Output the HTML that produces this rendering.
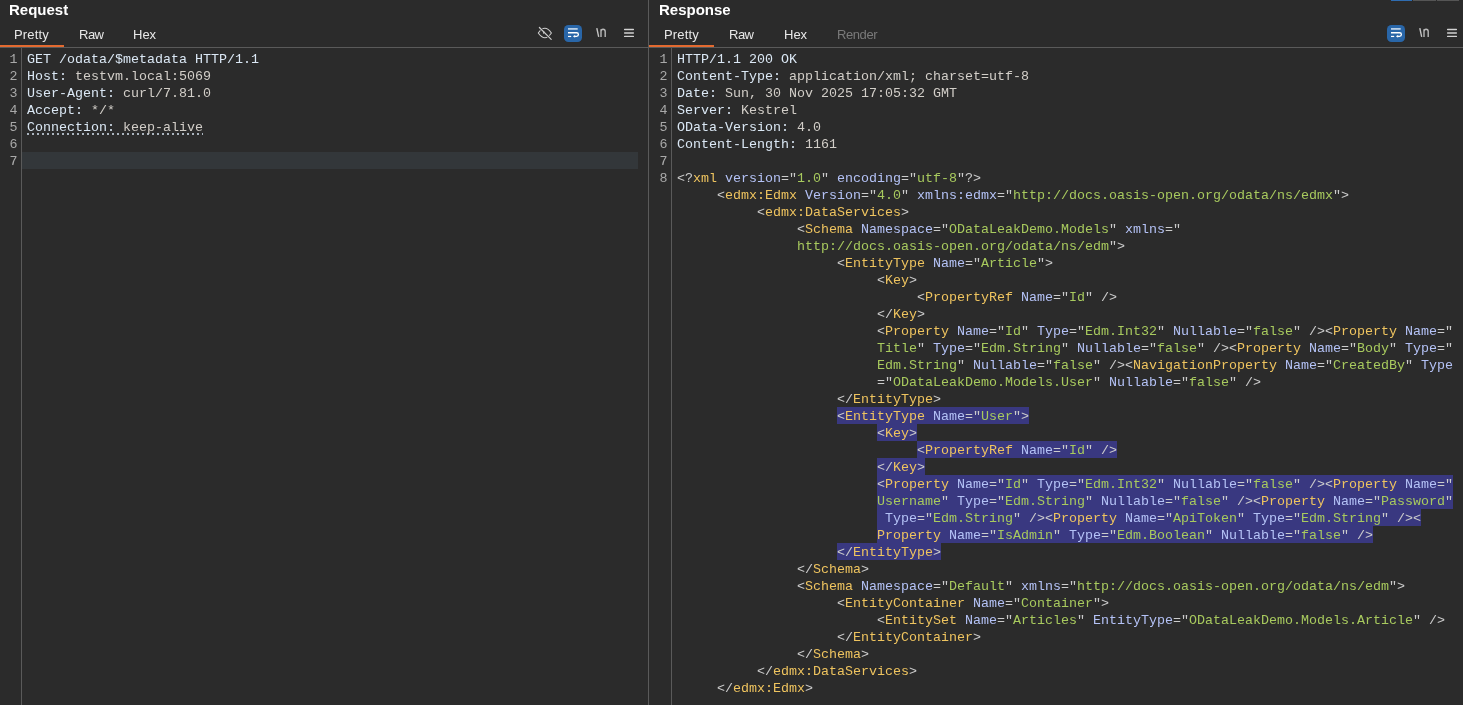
<!DOCTYPE html>
<html><head><meta charset="utf-8"><style>
html,body{margin:0;padding:0;}
body{width:1463px;height:705px;background:#2b2b2b;position:relative;overflow:hidden;font-family:"Liberation Sans",sans-serif;}
.abs{position:absolute;}
.row{will-change:transform;position:absolute;height:17px;line-height:17px;padding-top:1px;box-sizing:border-box;font-family:"Liberation Mono",monospace;font-size:13.333px;white-space:pre;}
.lnum{will-change:transform;position:absolute;height:17px;line-height:17px;padding-top:1px;box-sizing:border-box;font-family:"Liberation Mono",monospace;font-size:13.333px;text-align:right;color:#a9a9a9;}
.sel{position:absolute;height:17px;background:#393880;}
.plain{color:#dbe8f5;} .hname{color:#dbe8f5;} .hval{color:#d2cec8;}
.punct{color:#cccccc;} .tag{color:#efc45f;} .attr{color:#b4c2f6;} .val{color:#a8ca5e;}
.head{will-change:transform;position:absolute;top:-0.4px;font-size:15px;font-weight:bold;color:#ffffff;line-height:20px;}
.tab{will-change:transform;position:absolute;top:26px;font-size:13px;line-height:18px;color:#e8e8e8;}
</style></head>
<body>

<div class="abs" style="left:648px;top:0;width:1px;height:705px;background:#5a5a5a"></div>
<div class="abs" style="left:0;top:47px;width:1463px;height:1px;background:#5a5a5a"></div>
<div class="abs" style="left:0;top:45px;width:64px;height:2px;background:#e36a30"></div>
<div class="abs" style="left:649px;top:45px;width:65px;height:2px;background:#e36a30"></div>
<div class="abs" style="left:21px;top:48px;width:1px;height:657px;background:#5a5a5a"></div>
<div class="abs" style="left:671px;top:48px;width:1px;height:657px;background:#5a5a5a"></div>
<div class="abs" style="left:22px;top:152px;width:616px;height:17px;background:#33373a"></div>
<div class="abs" style="left:27px;top:133px;width:176px;height:2px;background:repeating-linear-gradient(90deg,#aab4be 0 2px,transparent 2px 5px)"></div>
<div class="head" style="left:9px">Request</div>
<div class="head" style="left:659px">Response</div>
<div class="tab" style="left:14px;letter-spacing:0.18px">Pretty</div>
<div class="tab" style="left:78.8px;letter-spacing:-0.5px">Raw</div>
<div class="tab" style="left:133px">Hex</div>
<div class="tab" style="left:664px;letter-spacing:0.18px">Pretty</div>
<div class="tab" style="left:728.8px;letter-spacing:-0.5px">Raw</div>
<div class="tab" style="left:784px">Hex</div>
<div class="tab" style="left:837px;letter-spacing:-0.42px;color:#7a7a7a">Render</div>
<div class="abs" style="left:1391px;top:0;width:21px;height:1px;background:#2f6cb0"></div>
<div class="abs" style="left:1413px;top:0;width:23px;height:1px;background:#555"></div>
<div class="abs" style="left:1437px;top:0;width:22px;height:1px;background:#555"></div>

<svg class="abs" style="left:0;top:0" width="1463" height="48" viewBox="0 0 1463 48" fill="none"><g transform="translate(0,0)"><path d="M538.3 33Q544.85 23.6 551.4 33Q544.85 42.4 538.3 33Z" fill="none" stroke="#cdcdcd" stroke-width="1.1"/>
<path d="M539.2 27.3L551.4 39.6" stroke="#2b2b2b" stroke-width="2.6"/>
<path d="M544.6 31.6A1.6 1.6 0 0 0 543.3 34.2Z" fill="#cdcdcd" stroke="none"/>
<path d="M539.4 27.5L551.2 39.4" stroke="#cdcdcd" stroke-width="1.2" stroke-linecap="round"/>

<rect x="564" y="25" width="18" height="17" rx="4.5" fill="#2966a8"/>
<rect x="568" y="28" width="9.7" height="1.8" fill="#b9cfe7"/>
<path d="M568 32.75H576.6A1.8 1.8 0 0 1 576.6 36.35H574.4" fill="none" stroke="#ffffff" stroke-width="1.3"/>
<path d="M572.9 36.35L575.1 34.9V37.8Z" fill="#ffffff" stroke="none"/>
<path d="M568 36.45H571.2" stroke="#ffffff" stroke-width="1.2"/>
<path d="M596.8 28.2L598.7 36.8" stroke="#c4c4c4" stroke-width="1.4"/>
<path d="M601 37V29.2M601 31.6Q601 29.3 603.1 29.3Q605.2 29.3 605.2 31.6V37" fill="none" stroke="#b8b8b8" stroke-width="1.4"/>
<path d="M624.6 29.5H633.4M624.6 33H633.4M624.6 36.4H633.4" stroke="#d2d2d2" stroke-width="1.3" stroke-linecap="round"/>
</g><g transform="translate(823,0)">
<rect x="564" y="25" width="18" height="17" rx="4.5" fill="#2966a8"/>
<rect x="568" y="28" width="9.7" height="1.8" fill="#b9cfe7"/>
<path d="M568 32.75H576.6A1.8 1.8 0 0 1 576.6 36.35H574.4" fill="none" stroke="#ffffff" stroke-width="1.3"/>
<path d="M572.9 36.35L575.1 34.9V37.8Z" fill="#ffffff" stroke="none"/>
<path d="M568 36.45H571.2" stroke="#ffffff" stroke-width="1.2"/>
<path d="M596.8 28.2L598.7 36.8" stroke="#c4c4c4" stroke-width="1.4"/>
<path d="M601 37V29.2M601 31.6Q601 29.3 603.1 29.3Q605.2 29.3 605.2 31.6V37" fill="none" stroke="#b8b8b8" stroke-width="1.4"/>
<path d="M624.6 29.5H633.4M624.6 33H633.4M624.6 36.4H633.4" stroke="#d2d2d2" stroke-width="1.3" stroke-linecap="round"/>
</g></svg>
<div class="row" style="left:27px;top:50px"><span class="plain">GET /odata/$metadata HTTP/1.1</span></div>
<div class="row" style="left:27px;top:67px"><span class="hname">Host:</span><span class="hval"> testvm.local:5069</span></div>
<div class="row" style="left:27px;top:84px"><span class="hname">User-Agent:</span><span class="hval"> curl/7.81.0</span></div>
<div class="row" style="left:27px;top:101px"><span class="hname">Accept:</span><span class="hval"> */*</span></div>
<div class="row" style="left:27px;top:118px"><span class="hname">Connection:</span><span class="hval"> keep-alive</span></div>
<div class="lnum" style="left:0;width:17.5px;top:50px">1</div>
<div class="lnum" style="left:0;width:17.5px;top:67px">2</div>
<div class="lnum" style="left:0;width:17.5px;top:84px">3</div>
<div class="lnum" style="left:0;width:17.5px;top:101px">4</div>
<div class="lnum" style="left:0;width:17.5px;top:118px">5</div>
<div class="lnum" style="left:0;width:17.5px;top:135px">6</div>
<div class="lnum" style="left:0;width:17.5px;top:152px">7</div>
<div class="row" style="left:677px;top:50px"><span class="plain">HTTP/1.1 200 OK</span></div>
<div class="row" style="left:677px;top:67px"><span class="hname">Content-Type:</span><span class="hval"> application/xml; charset=utf-8</span></div>
<div class="row" style="left:677px;top:84px"><span class="hname">Date:</span><span class="hval"> Sun, 30 Nov 2025 17:05:32 GMT</span></div>
<div class="row" style="left:677px;top:101px"><span class="hname">Server:</span><span class="hval"> Kestrel</span></div>
<div class="row" style="left:677px;top:118px"><span class="hname">OData-Version:</span><span class="hval"> 4.0</span></div>
<div class="row" style="left:677px;top:135px"><span class="hname">Content-Length:</span><span class="hval"> 1161</span></div>
<div class="lnum" style="left:650px;width:17.5px;top:50px">1</div>
<div class="lnum" style="left:650px;width:17.5px;top:67px">2</div>
<div class="lnum" style="left:650px;width:17.5px;top:84px">3</div>
<div class="lnum" style="left:650px;width:17.5px;top:101px">4</div>
<div class="lnum" style="left:650px;width:17.5px;top:118px">5</div>
<div class="lnum" style="left:650px;width:17.5px;top:135px">6</div>
<div class="lnum" style="left:650px;width:17.5px;top:152px">7</div>
<div class="lnum" style="left:650px;width:17.5px;top:169px">8</div>
<div class="row" style="left:677px;top:169px"><span class="punct">&lt;?</span><span class="tag">xml </span><span class="attr">version</span><span class="punct">="</span><span class="val">1.0</span><span class="punct">" </span><span class="attr">encoding</span><span class="punct">="</span><span class="val">utf-8</span><span class="punct">"?&gt;</span></div>
<div class="row" style="left:717px;top:186px"><span class="punct">&lt;</span><span class="tag">edmx:Edmx </span><span class="attr">Version</span><span class="punct">="</span><span class="val">4.0</span><span class="punct">" </span><span class="attr">xmlns:edmx</span><span class="punct">="</span><span class="val">http://docs.oasis-open.org/odata/ns/edmx</span><span class="punct">"&gt;</span></div>
<div class="row" style="left:757px;top:203px"><span class="punct">&lt;</span><span class="tag">edmx:DataServices</span><span class="punct">&gt;</span></div>
<div class="row" style="left:797px;top:220px"><span class="punct">&lt;</span><span class="tag">Schema </span><span class="attr">Namespace</span><span class="punct">="</span><span class="val">ODataLeakDemo.Models</span><span class="punct">" </span><span class="attr">xmlns</span><span class="punct">="</span></div>
<div class="row" style="left:797px;top:237px"><span class="val">http://docs.oasis-open.org/odata/ns/edm</span><span class="punct">"&gt;</span></div>
<div class="row" style="left:837px;top:254px"><span class="punct">&lt;</span><span class="tag">EntityType </span><span class="attr">Name</span><span class="punct">="</span><span class="val">Article</span><span class="punct">"&gt;</span></div>
<div class="row" style="left:877px;top:271px"><span class="punct">&lt;</span><span class="tag">Key</span><span class="punct">&gt;</span></div>
<div class="row" style="left:917px;top:288px"><span class="punct">&lt;</span><span class="tag">PropertyRef </span><span class="attr">Name</span><span class="punct">="</span><span class="val">Id</span><span class="punct">" /&gt;</span></div>
<div class="row" style="left:877px;top:305px"><span class="punct">&lt;/</span><span class="tag">Key</span><span class="punct">&gt;</span></div>
<div class="row" style="left:877px;top:322px"><span class="punct">&lt;</span><span class="tag">Property </span><span class="attr">Name</span><span class="punct">="</span><span class="val">Id</span><span class="punct">" </span><span class="attr">Type</span><span class="punct">="</span><span class="val">Edm.Int32</span><span class="punct">" </span><span class="attr">Nullable</span><span class="punct">="</span><span class="val">false</span><span class="punct">" /&gt;&lt;</span><span class="tag">Property </span><span class="attr">Name</span><span class="punct">="</span></div>
<div class="row" style="left:877px;top:339px"><span class="val">Title</span><span class="punct">" </span><span class="attr">Type</span><span class="punct">="</span><span class="val">Edm.String</span><span class="punct">" </span><span class="attr">Nullable</span><span class="punct">="</span><span class="val">false</span><span class="punct">" /&gt;&lt;</span><span class="tag">Property </span><span class="attr">Name</span><span class="punct">="</span><span class="val">Body</span><span class="punct">" </span><span class="attr">Type</span><span class="punct">="</span></div>
<div class="row" style="left:877px;top:356px"><span class="val">Edm.String</span><span class="punct">" </span><span class="attr">Nullable</span><span class="punct">="</span><span class="val">false</span><span class="punct">" /&gt;&lt;</span><span class="tag">NavigationProperty </span><span class="attr">Name</span><span class="punct">="</span><span class="val">CreatedBy</span><span class="punct">" </span><span class="attr">Type</span></div>
<div class="row" style="left:877px;top:373px"><span class="punct">="</span><span class="val">ODataLeakDemo.Models.User</span><span class="punct">" </span><span class="attr">Nullable</span><span class="punct">="</span><span class="val">false</span><span class="punct">" /&gt;</span></div>
<div class="row" style="left:837px;top:390px"><span class="punct">&lt;/</span><span class="tag">EntityType</span><span class="punct">&gt;</span></div>
<div class="sel" style="left:837px;top:407px;width:192px"></div>
<div class="row" style="left:837px;top:407px"><span class="punct">&lt;</span><span class="tag">EntityType </span><span class="attr">Name</span><span class="punct">="</span><span class="val">User</span><span class="punct">"&gt;</span></div>
<div class="sel" style="left:877px;top:424px;width:40px"></div>
<div class="row" style="left:877px;top:424px"><span class="punct">&lt;</span><span class="tag">Key</span><span class="punct">&gt;</span></div>
<div class="sel" style="left:917px;top:441px;width:200px"></div>
<div class="row" style="left:917px;top:441px"><span class="punct">&lt;</span><span class="tag">PropertyRef </span><span class="attr">Name</span><span class="punct">="</span><span class="val">Id</span><span class="punct">" /&gt;</span></div>
<div class="sel" style="left:877px;top:458px;width:48px"></div>
<div class="row" style="left:877px;top:458px"><span class="punct">&lt;/</span><span class="tag">Key</span><span class="punct">&gt;</span></div>
<div class="sel" style="left:877px;top:475px;width:576px"></div>
<div class="row" style="left:877px;top:475px"><span class="punct">&lt;</span><span class="tag">Property </span><span class="attr">Name</span><span class="punct">="</span><span class="val">Id</span><span class="punct">" </span><span class="attr">Type</span><span class="punct">="</span><span class="val">Edm.Int32</span><span class="punct">" </span><span class="attr">Nullable</span><span class="punct">="</span><span class="val">false</span><span class="punct">" /&gt;&lt;</span><span class="tag">Property </span><span class="attr">Name</span><span class="punct">="</span></div>
<div class="sel" style="left:877px;top:492px;width:576px"></div>
<div class="row" style="left:877px;top:492px"><span class="val">Username</span><span class="punct">" </span><span class="attr">Type</span><span class="punct">="</span><span class="val">Edm.String</span><span class="punct">" </span><span class="attr">Nullable</span><span class="punct">="</span><span class="val">false</span><span class="punct">" /&gt;&lt;</span><span class="tag">Property </span><span class="attr">Name</span><span class="punct">="</span><span class="val">Password</span><span class="punct">"</span></div>
<div class="sel" style="left:877px;top:509px;width:544px"></div>
<div class="row" style="left:877px;top:509px"><span class="plain"> </span><span class="attr">Type</span><span class="punct">="</span><span class="val">Edm.String</span><span class="punct">" /&gt;&lt;</span><span class="tag">Property </span><span class="attr">Name</span><span class="punct">="</span><span class="val">ApiToken</span><span class="punct">" </span><span class="attr">Type</span><span class="punct">="</span><span class="val">Edm.String</span><span class="punct">" /&gt;&lt;</span></div>
<div class="sel" style="left:877px;top:526px;width:496px"></div>
<div class="row" style="left:877px;top:526px"><span class="tag">Property </span><span class="attr">Name</span><span class="punct">="</span><span class="val">IsAdmin</span><span class="punct">" </span><span class="attr">Type</span><span class="punct">="</span><span class="val">Edm.Boolean</span><span class="punct">" </span><span class="attr">Nullable</span><span class="punct">="</span><span class="val">false</span><span class="punct">" /&gt;</span></div>
<div class="sel" style="left:837px;top:543px;width:104px"></div>
<div class="row" style="left:837px;top:543px"><span class="punct">&lt;/</span><span class="tag">EntityType</span><span class="punct">&gt;</span></div>
<div class="row" style="left:797px;top:560px"><span class="punct">&lt;/</span><span class="tag">Schema</span><span class="punct">&gt;</span></div>
<div class="row" style="left:797px;top:577px"><span class="punct">&lt;</span><span class="tag">Schema </span><span class="attr">Namespace</span><span class="punct">="</span><span class="val">Default</span><span class="punct">" </span><span class="attr">xmlns</span><span class="punct">="</span><span class="val">http://docs.oasis-open.org/odata/ns/edm</span><span class="punct">"&gt;</span></div>
<div class="row" style="left:837px;top:594px"><span class="punct">&lt;</span><span class="tag">EntityContainer </span><span class="attr">Name</span><span class="punct">="</span><span class="val">Container</span><span class="punct">"&gt;</span></div>
<div class="row" style="left:877px;top:611px"><span class="punct">&lt;</span><span class="tag">EntitySet </span><span class="attr">Name</span><span class="punct">="</span><span class="val">Articles</span><span class="punct">" </span><span class="attr">EntityType</span><span class="punct">="</span><span class="val">ODataLeakDemo.Models.Article</span><span class="punct">" /&gt;</span></div>
<div class="row" style="left:837px;top:628px"><span class="punct">&lt;/</span><span class="tag">EntityContainer</span><span class="punct">&gt;</span></div>
<div class="row" style="left:797px;top:645px"><span class="punct">&lt;/</span><span class="tag">Schema</span><span class="punct">&gt;</span></div>
<div class="row" style="left:757px;top:662px"><span class="punct">&lt;/</span><span class="tag">edmx:DataServices</span><span class="punct">&gt;</span></div>
<div class="row" style="left:717px;top:679px"><span class="punct">&lt;/</span><span class="tag">edmx:Edmx</span><span class="punct">&gt;</span></div>

</body></html>
